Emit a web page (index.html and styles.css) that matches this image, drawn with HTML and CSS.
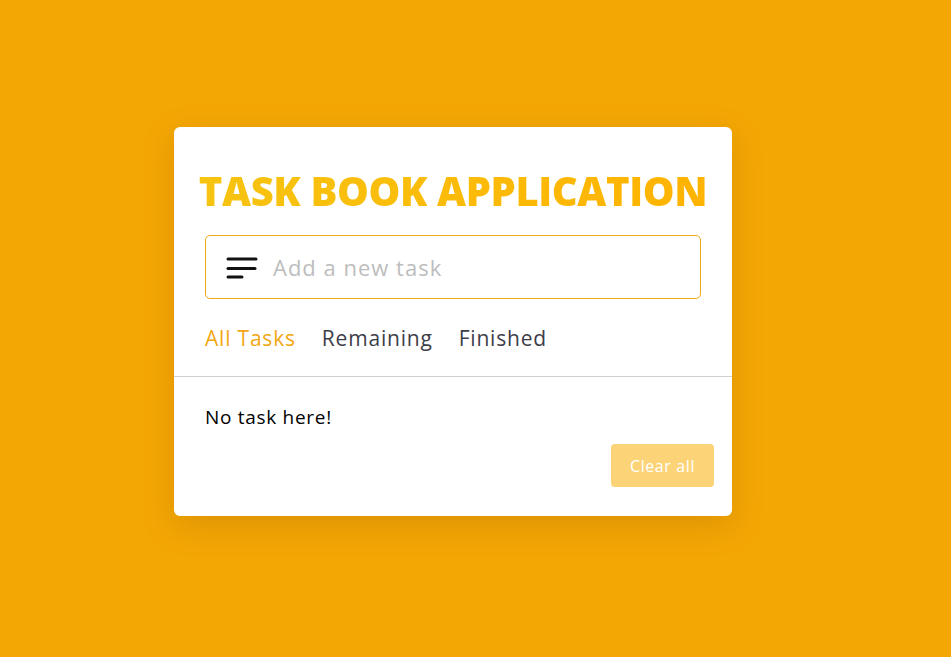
FILE: index.html
```html
<!DOCTYPE html>
<html>
<head>
<meta charset="utf-8">
<link rel="stylesheet" href="styles.css">
</head>
<body>
<div class="card">
  <div class="top">
    <h1 class="title">TASK BOOK APPLICATION</h1>
    <div class="input">
      <svg class="icon" width="32" height="24" viewBox="0 0 32 24">
        <line x1="2" y1="3" x2="30" y2="3" />
        <line x1="2" y1="12.5" x2="29" y2="12.5" />
        <line x1="2" y1="21" x2="16" y2="21" />
      </svg>
      <span class="placeholder">Add a new task</span>
    </div>
    <div class="tabs">
      <span class="tab active">All Tasks</span>
      <span class="tab">Remaining</span>
      <span class="tab">Finished</span>
    </div>
  </div>
  <div class="bottom">
    <p class="empty">No task here!</p>
    <div class="actions"><button class="clear">Clear all</button></div>
  </div>
</div>
</body>
</html>
```
FILE: styles.css
```css
html, body { margin: 0; }
body {
  background: #f3a704;
  min-height: 657px;
  padding: 127px 0 0 174px;
  box-sizing: border-box;
  font-family: "Open Sans", sans-serif;
}
.card {
  width: 558px;
  height: 389px;
  background: #fff;
  border-radius: 6px;
  box-shadow: 0 10px 30px rgba(160, 90, 0, 0.25);
  box-sizing: border-box;
}
.top {
  padding: 0 31px;
  border-bottom: 1px solid #d0d0d0;
  height: 250px;
  box-sizing: border-box;
}
.title {
  margin: 0 -10px;
  padding-top: 34px;
  height: 108px;
  box-sizing: border-box;
  text-align: center;
  font-size: 40px;
  line-height: 60px;
  font-weight: 800;
  letter-spacing: -0.4px;
  white-space: nowrap;
  background: linear-gradient(90deg, #f6c411, #ffb300);
  -webkit-background-clip: text;
  background-clip: text;
  color: transparent;
}
.input {
  height: 64px;
  border: 1px solid #f0a81a;
  border-radius: 5px;
  box-sizing: border-box;
  display: flex;
  align-items: center;
  padding-left: 20px;
}
.icon { margin-top: 1px; }
.icon line {
  stroke: #111;
  stroke-width: 3;
  stroke-linecap: round;
}
.placeholder {
  margin-left: 15px;
  font-size: 22px;
  letter-spacing: 1px;
  color: #bdbdbd;
}
.tabs {
  display: flex;
  gap: 26px;
  margin-top: 25px;
  font-size: 21px;
  letter-spacing: 0.8px;
  color: #3e3e48;
}
.tab.active { color: #f3a712; }
.bottom { padding: 0 18px 0 31px; }
.empty {
  margin: 28px 0 0;
  font-size: 19px;
  letter-spacing: 0.7px;
  line-height: 24px;
  color: #000;
}
.actions {
  display: flex;
  justify-content: flex-end;
  margin-top: 15px;
}
.clear {
  width: 103px;
  height: 43px;
  border: none;
  border-radius: 4px;
  background: #fcd377;
  color: #fff;
  font-family: "Open Sans", sans-serif;
  font-size: 16px;
  letter-spacing: 0.6px;
  padding: 0;
}
```
